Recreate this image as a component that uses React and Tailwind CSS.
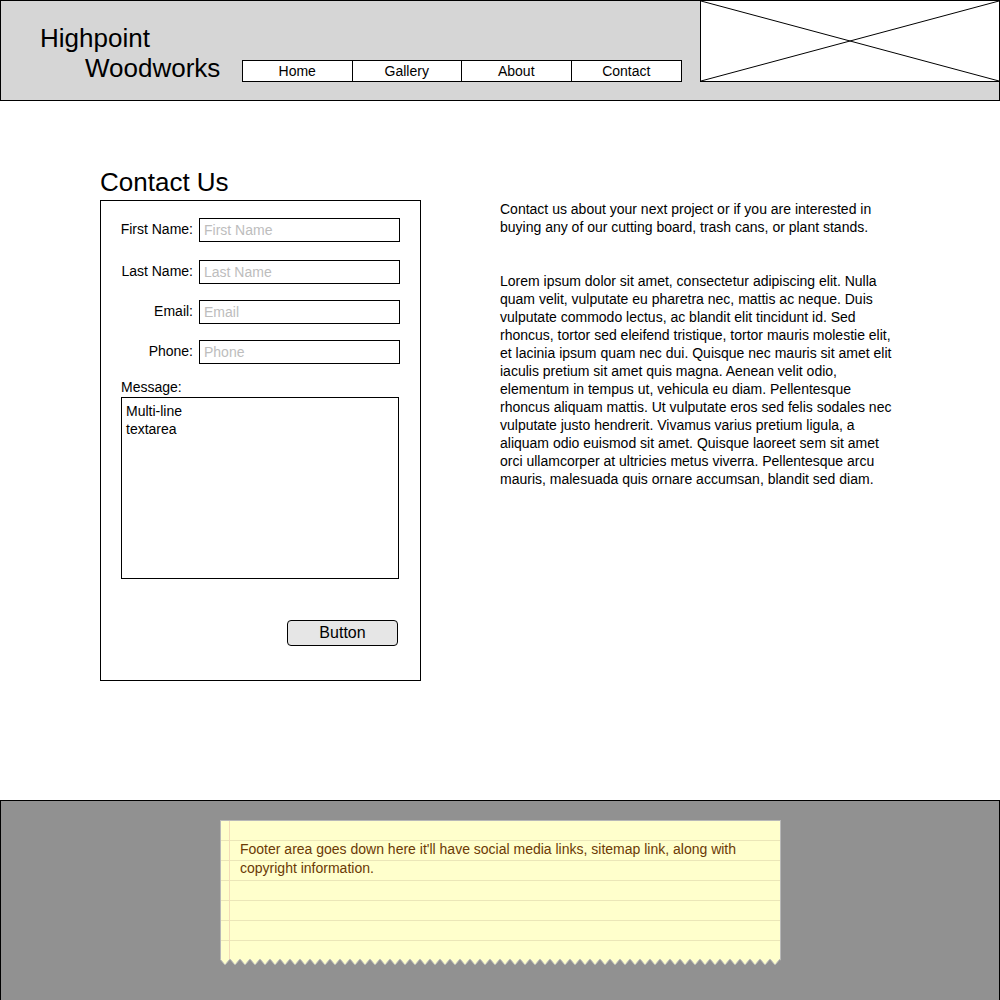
import React from "react";

const navItems = ["Home", "Gallery", "About", "Contact"];

const fields = [
  { label: "First Name:", placeholder: "First Name", mt: "mt-[17px]" },
  { label: "Last Name:", placeholder: "Last Name", mt: "mt-[18px]" },
  { label: "Email:", placeholder: "Email", mt: "mt-[16px]" },
  { label: "Phone:", placeholder: "Phone", mt: "mt-[16px]" },
];

const lorem = [
  "Lorem ipsum dolor sit amet, consectetur adipiscing elit. Nulla",
  "quam velit, vulputate eu pharetra nec, mattis ac neque. Duis",
  "vulputate commodo lectus, ac blandit elit tincidunt id. Sed",
  "rhoncus, tortor sed eleifend tristique, tortor mauris molestie elit,",
  "et lacinia ipsum quam nec dui. Quisque nec mauris sit amet elit",
  "iaculis pretium sit amet quis magna. Aenean velit odio,",
  "elementum in tempus ut, vehicula eu diam. Pellentesque",
  "rhoncus aliquam mattis. Ut vulputate eros sed felis sodales nec",
  "vulputate justo hendrerit. Vivamus varius pretium ligula, a",
  "aliquam odio euismod sit amet. Quisque laoreet sem sit amet",
  "orci ullamcorper at ultricies metus viverra. Pellentesque arcu",
  "mauris, malesuada quis ornare accumsan, blandit sed diam.",
];

function zigzag(width, step, depth) {
  let d = "M0 0";
  for (let x = 0; x < width; x += step) {
    d += ` L${x + step / 2} ${depth} L${Math.min(x + step, width)} 0`;
  }
  return d;
}

function ImagePlaceholder() {
  return (
    <div className="w-[300px] h-[82px] -mt-px -mr-px border border-black bg-white">
      <svg width="298" height="80" className="block">
        <line x1="0" y1="0" x2="298" y2="80" stroke="#000" strokeWidth="1" />
        <line x1="0" y1="80" x2="298" y2="0" stroke="#000" strokeWidth="1" />
      </svg>
    </div>
  );
}

function Header() {
  return (
    <header className="h-[101px] border border-black bg-[#d6d6d6] flex">
      <div className="w-[241px] pt-[22px] pl-[39px] text-[26px] leading-[30px] text-black">
        <div>Highpoint</div>
        <div className="pl-[45px]">Woodworks</div>
      </div>
      <nav className="self-end mb-[18px] w-[440px] h-[22px] grid grid-cols-4 border border-black bg-white">
        {navItems.map((item, i) => (
          <div
            key={item}
            className={`flex items-center justify-center text-[14px] leading-[20px] ${
              i < navItems.length - 1 ? "border-r border-black" : ""
            }`}
          >
            {item}
          </div>
        ))}
      </nav>
      <div className="w-[18px]" />
      <ImagePlaceholder />
    </header>
  );
}

function ContactForm() {
  return (
    <div className="w-[321px] h-[481px] border border-black flex flex-col">
      {fields.map((f) => (
        <div key={f.label} className={`flex items-center ${f.mt}`}>
          <label className="w-[92px] text-right text-[14px] leading-[18px] -mt-[2px]">{f.label}</label>
          <input
            type="text"
            placeholder={f.placeholder}
            className="ml-[6px] w-[201px] h-[24px] border border-black px-[4px] text-[14px] placeholder:text-[#bdbdbd] outline-none"
          />
        </div>
      ))}
      <div className="mt-[15px] ml-[20px] text-[14px] leading-[16px]">Message:</div>
      <textarea
        readOnly
        value={"Multi-line\ntextarea"}
        className="mt-[2px] ml-[20px] w-[278px] h-[182px] border border-black px-[4px] py-[4px] text-[14px] leading-[18px] resize-none outline-none"
      />
      <div className="mt-[41px] flex justify-end pr-[22px]">
        <button className="w-[111px] h-[26px] rounded-[4px] border border-black bg-[#e6e6e6] text-[16px] leading-[20px]">
          Button
        </button>
      </div>
    </div>
  );
}

function Main() {
  return (
    <main className="h-[699px] flex pl-[100px]">
      <div className="pt-[66px]">
        <h1 className="text-[26px] leading-[30px] mb-[3px]">Contact Us</h1>
        <ContactForm />
      </div>
      <div className="ml-[79px] pt-[99px] w-[400px] text-[14px] leading-[18px]">
        <p>
          Contact us about your next project or if you are interested in
          <br />
          buying any of our cutting board, trash cans, or plant stands.
        </p>
        <p className="mt-[36px]">
          {lorem.map((line, i) => (
            <React.Fragment key={i}>
              {line}
              {i < lorem.length - 1 && <br />}
            </React.Fragment>
          ))}
        </p>
      </div>
    </main>
  );
}

function Footer() {
  return (
    <footer className="h-[201px] border border-black bg-[#919191] pt-[19px] pl-[219px]">
      <div className="w-[561px]">
        <div className="h-[140px] border-t border-l border-r border-[#b8b8b8] flex bg-[#ffffcc] bg-[repeating-linear-gradient(to_bottom,transparent_0px,transparent_19px,#ebe6b8_19px,#ebe6b8_20px)]">
          <div className="w-[8px]" />
          <div className="flex-1 border-l border-[#f3dcb8] pl-[10px] pt-[19px] text-[14px] leading-[19px] text-[#6b3a05]">
            Footer area goes down here it'll have social media links, sitemap link, along with
            <br />
            copyright information.
          </div>
        </div>
        <svg width="561" height="7" className="block -mt-px">
          <path d={zigzag(561, 10, 6) + " Z"} fill="#ffffcc" />
          <path d={zigzag(561, 10, 6)} fill="none" stroke="#b8b8b8" strokeWidth="1" />
        </svg>
      </div>
    </footer>
  );
}

export default function App() {
  return (
    <div className="w-[1000px] h-[1000px] overflow-hidden bg-white text-black font-['Liberation_Sans',Arial,sans-serif]">
      <Header />
      <Main />
      <Footer />
    </div>
  );
}
